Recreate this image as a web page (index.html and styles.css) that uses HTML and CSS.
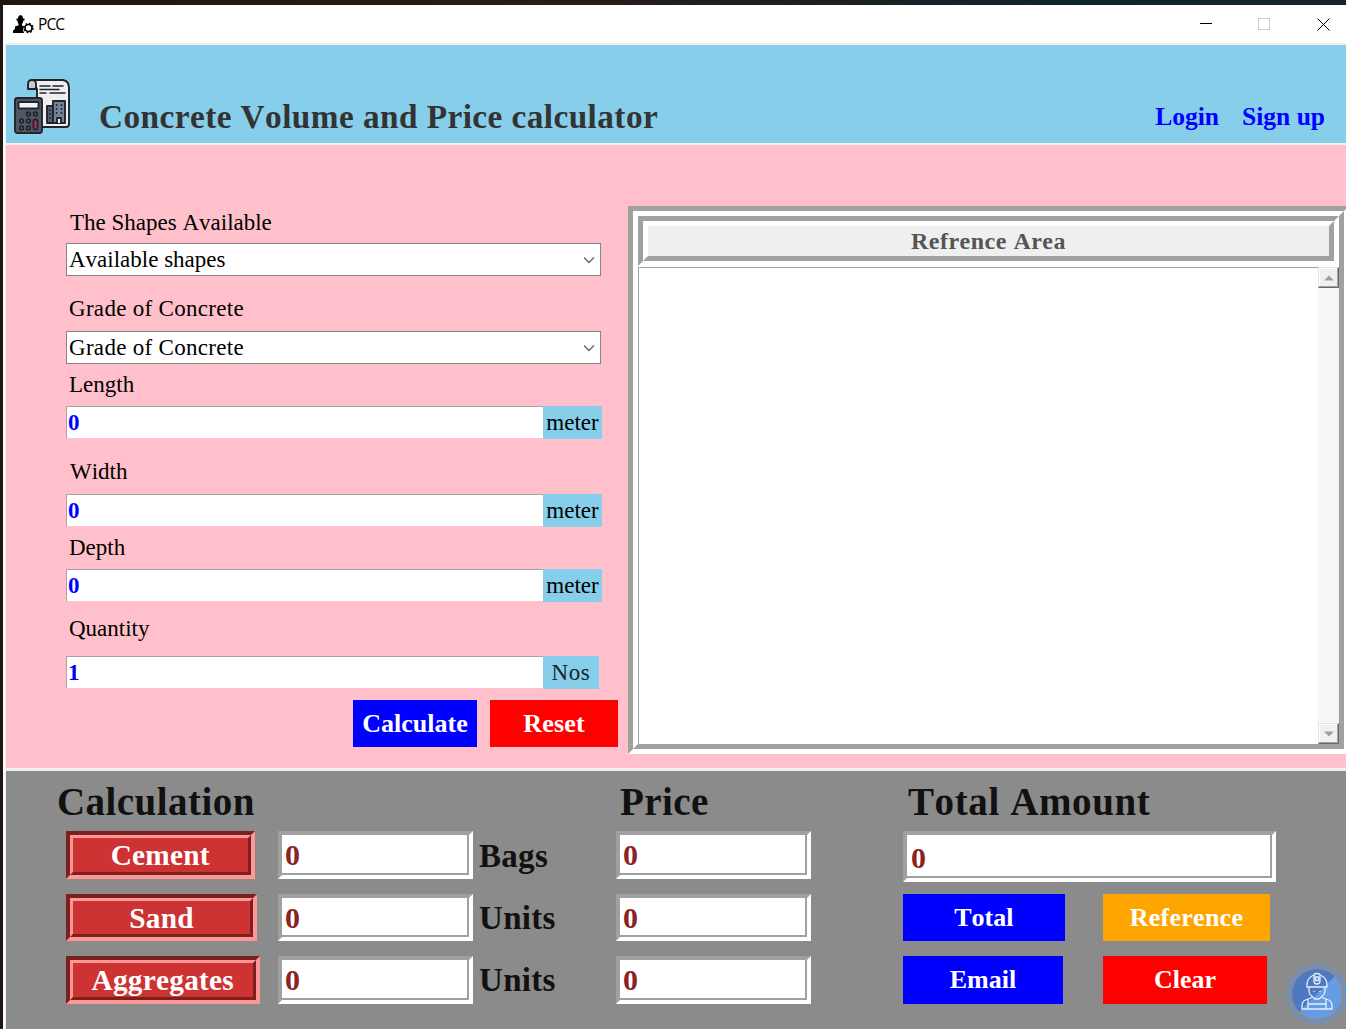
FILE: index.html
```html
<!DOCTYPE html>
<html lang="en">
<head>
<meta charset="utf-8">
<title>PCC</title>
<link rel="stylesheet" href="styles.css">
</head>
<body>
<div class="window">
  <header class="titlebar">
    <svg class="app-icon" width="21" height="20" viewBox="0 0 21 20">
      <path d="M3.500 3.500H5L5.600 1l1.900-1 2 1L10 3.500h1.500V5.500H10.300c0 1.500-.6 2.500-1.300 3.500v1.500l2 1-1 3.500 1 3H0v-2.500l2-1.500V11.500l3.500-1.200V9C4.800 8 4.500 7 4.500 5.500h-1z"/>
      <circle cx="15.500" cy="13" r="3.500" fill="none" stroke="#000" stroke-width="1.700"/>
      <circle cx="15.500" cy="13" r="4.600" fill="none" stroke="#000" stroke-width="1.300" stroke-dasharray="1.810 1.800"/>
    </svg>
    <span class="app-name">PCC</span>
    <svg class="controls" width="132" height="16" viewBox="0 0 132 16" fill="none">
      <path d="M0 7.500h12" stroke="#000"/>
      <rect x="58.500" y="2.500" width="11" height="11" stroke="#ccc"/>
      <path d="M117.500 2.500l12 12m0-12l-12 12" stroke="#000"/>
    </svg>
  </header>

  <div class="banner">
    <svg class="logo" width="58" height="58" viewBox="0 0 58 58" stroke="#20252b" stroke-width="1.900" stroke-linejoin="round" stroke-linecap="round">
      <path d="M18 2h31q6 1 6 8v36q0 3-3 3H23V11z" fill="#efefef"/>
      <path d="M14 11V6q0-4 4-4 4 0 4 4v5z" fill="#c8cccf"/>
      <path d="M26 8h10m3 0h10M26 11.500h19M26 15h6m4 0h15" stroke-width="1.500"/>
      <path d="M33 28h6v17h-6z" fill="#536271"/>
      <path d="M39 23h12v22H39z" fill="#718599"/>
      <path d="M42.500 27h.1m4.900 0h.1m-5.100 4h.1m4.900 0h.1m-5.100 4h.1m4.900 0h.1M36 32v.1M36 36v.1M36 40v.1" stroke-width="1.800"/>
      <path d="M43 45v-5h4v5" fill="#efefef"/>
      <rect x="1" y="20" width="27" height="35" rx="2.500" fill="#4e5865"/>
      <rect x="4.500" y="24" width="20" height="6.500" rx="1" fill="#f3f3f3"/>
      <g fill="#8a96a5"><circle cx="14.500" cy="36" r="1.700"/><circle cx="21.500" cy="36" r="1.700"/><circle cx="7.500" cy="43" r="1.700"/><circle cx="14.500" cy="43" r="1.700"/><circle cx="7.500" cy="50" r="1.700"/><circle cx="14.500" cy="50" r="1.700"/></g>
      <rect x="19.500" y="41.500" width="4" height="10" rx="1.500" fill="#cb2f4b"/>
    </svg>
    <h1>Concrete Volume and Price calculator</h1>
    <nav><a>Login</a><a>Sign up</a></nav>
  </div>

  <main class="workspace">
    <form class="form">
      <label class="first">The Shapes Available</label>
      <div class="combo"><span>Available shapes</span><svg width="12" height="8" viewBox="0 0 12 8"><path d="M1 1.500l5 5 5-5" fill="none" stroke="#666" stroke-width="1.300"/></svg></div>
      <label class="gap-wide grade">Grade of Concrete</label>
      <div class="combo grade"><span>Grade of Concrete</span><svg width="12" height="8" viewBox="0 0 12 8"><path d="M1 1.500l5 5 5-5" fill="none" stroke="#666" stroke-width="1.300"/></svg></div>
      <label>Length</label>
      <div class="entry"><b>0</b><span class="unit">meter</span></div>
      <label class="gap-wide second">Width</label>
      <div class="entry"><b>0</b><span class="unit">meter</span></div>
      <label>Depth</label>
      <div class="entry"><b>0</b><span class="unit">meter</span></div>
      <label class="gap-qty">Quantity</label>
      <div class="entry"><b>1</b><span class="unit nos">Nos</span></div>
      <div class="actions">
        <span class="btn blue calculate">Calculate</span>
        <span class="btn red reset">Reset</span>
      </div>
    </form>

    <section class="reference">
      <div class="reference-inner">
        <div class="ref-title"><h2>Refrence Area</h2></div>
        <div class="ref-body">
          <div class="ref-text"></div>
          <div class="scrollbar">
            <span class="arrow"><svg width="10" height="6" viewBox="0 0 10 6"><path d="M0 5.500L5 .5l5 5z" fill="#a0a0a0"/></svg></span>
            <span class="arrow"><svg width="10" height="6" viewBox="0 0 10 6"><path d="M0 .5l5 5 5-5z" fill="#a0a0a0"/></svg></span>
          </div>
        </div>
      </div>
    </section>
  </main>

  <footer class="results">
    <section class="calc">
      <h2>Calculation</h2>
      <div class="row"><span class="ridge cement"><i>Cement</i></span><span class="field"><i>0</i></span><b class="bags">Bags</b></div>
      <div class="row"><span class="ridge sand"><i>Sand</i></span><span class="field"><i>0</i></span><b>Units</b></div>
      <div class="row"><span class="ridge aggregates"><i>Aggregates</i></span><span class="field"><i>0</i></span><b>Units</b></div>
    </section>
    <section class="price">
      <h2>Price</h2>
      <div class="row"><span class="field"><i>0</i></span></div>
      <div class="row"><span class="field"><i>0</i></span></div>
      <div class="row"><span class="field"><i>0</i></span></div>
    </section>
    <section class="total">
      <h2>Total Amount</h2>
      <div class="row"><span class="field sum"><i>0</i></span></div>
      <div class="row"><span class="btn blue total-btn">Total</span><span class="btn orange reference-btn">Reference</span></div>
      <div class="row"><span class="btn blue email-btn">Email</span><span class="btn red clear-btn">Clear</span></div>
    </section>
    <svg class="badge" width="60" height="62" viewBox="0 0 60 62">
      <circle cx="30" cy="31" r="28.700" fill="none" stroke="#6293d8" stroke-width="2"/>
      <circle cx="30" cy="31" r="25" fill="#669be6"/>
      <path d="M12.300 48.700A25 25 0 0 1 47.700 13.300z" fill="#4e79c1"/>
      <g fill="none" stroke="#e6eefb" stroke-width="1.300" stroke-linejoin="round">
        <path d="M20 24v-2.500q0-7 7-9.500 0-1.500 3-1.500t3 1.500q7 2.500 7 9.500V24H20z"/>
        <path d="M27 12v6q0 3 3 3t3-3v-6M28.500 14h3v3.500h-3zM22 24v4q0 3 3 5.500l3 2.500h4l3-2.500q3-2.500 3-5.500v-4M27 28v1M33 28v1"/>
        <path d="M25 34.500L18.500 37q-3.500 1.500-3.500 6v3h30v-3q0-4.500-3.500-6L35 34.500M21 36v10M39 36v10M21 41h18"/>
      </g>
    </svg>
  </footer>
</div>
</body>
</html>
```
FILE: styles.css
```css
* { box-sizing: border-box; }

body {
  margin: 0;
  width: 1346px;
  height: 1029px;
  overflow: hidden;
  padding: 5px 0 0 3px;
  background: linear-gradient(90deg, #1f1511, #2a1c16 40%, #10242c 80%, #16252a);
  font-family: "Liberation Serif", "Times New Roman", serif;
  font-kerning: none;
  color: #111;
}

h1, h2 { margin: 0; font-weight: bold; white-space: nowrap; }
i { font-style: normal; }

.window {
  width: 1343px;
  height: 1024px;
  display: flex;
  flex-direction: column;
  background: #f0f0f0;
  border-left: 2px solid #fbfbfb;
  padding-left: 1px;
  overflow: hidden;
}

.titlebar {
  height: 38px;
  flex: none;
  display: flex;
  align-items: center;
  margin-left: -2px;
  padding: 0 14px 0 9px;
  background: #fff;
}
.app-icon { margin-top: 1px; }
.app-name {
  margin: -1px 0 0 4px;
  font: 15.500px/20px "Open Sans", "Noto Sans", sans-serif;
  letter-spacing: -.9px;
  color: #000;
}
.controls { margin: -1px 0 0 auto; }

.banner {
  height: 98px;
  flex: none;
  margin-top: 2px;
  display: flex;
  align-items: flex-start;
  background: #87ceeb;
}
.logo { margin: 33px 0 0 8px; }
.banner h1 {
  margin: 52px 0 0 27px;
  font-size: 33.300px;
  line-height: 40px;
  letter-spacing: .43px;
  color: #333;
}
.banner nav {
  margin: 52px 21px 0 auto;
  display: flex;
  gap: 23px;
  font-size: 25.500px;
  font-weight: bold;
  line-height: 40px;
  color: #00f;
}

.workspace {
  height: 623px;
  flex: none;
  margin-top: 2px;
  display: flex;
  align-items: flex-start;
  background: #ffc0cb;
}

.form {
  width: 562px;
  flex: none;
  padding: 61px 0 0 60px;
  font-size: 23px;
  color: #000;
}
.form label {
  display: block;
  height: 42px;
  padding-left: 3px;
  line-height: 41px;
}
.form label.first { height: 37px; padding-left: 4px; line-height: 33px; }
.form label.gap-wide { height: 55px; line-height: 66px; }
.form label.second { height: 54.500px; padding-left: 4px; }
.form label.gap-qty { height: 54.500px; line-height: 54px; }
.form .grade { letter-spacing: .3px; }

.combo {
  width: 535px;
  height: 33px;
  display: flex;
  align-items: center;
  justify-content: space-between;
  padding: 0 5px 0 2px;
  border: 1px solid #868686;
  background: #fff;
  line-height: 31px;
}
.entry {
  width: 536px;
  height: 33px;
  display: flex;
}
.entry b {
  width: 477px;
  height: 32px;
  padding-left: 1px;
  border-top: 1px solid #a5a5a5;
  border-left: 1px solid #a5a5a5;
  background: #fff;
  line-height: 31px;
  color: #00f;
}
.unit {
  width: 59px;
  height: 33px;
  background: #87ceeb;
  line-height: 33px;
  text-align: center;
}
.unit.nos { width: 56px; letter-spacing: .6px; color: #16232a; }

.btn {
  height: 47.500px;
  flex: none;
  font-size: 26px;
  font-weight: bold;
  line-height: 48px;
  text-align: center;
  color: #fff;
}
.blue { background: #00f; }
.red { background: #f00; }
.orange { background: orange; }

.actions {
  display: flex;
  gap: 13px;
  margin: 10.500px 0 0 287px;
}
.calculate { width: 124px; }
.reset { width: 128px; letter-spacing: .2px; }

.reference {
  width: 721px;
  height: 548px;
  flex: none;
  margin: 61px 0 0 60px;
  border: 5px solid;
  border-color: #a0a0a0 #fff #fff #a0a0a0;
}
.reference-inner {
  height: 538px;
  display: flex;
  flex-direction: column;
  border: 5px solid;
  border-color: #fff #a0a0a0 #a0a0a0 #fff;
  background: #fff;
}
.ref-title {
  width: 701px;
  height: 50px;
  border: 5px solid;
  border-color: #a0a0a0 #fff #fff #a0a0a0;
}
.ref-title h2 {
  height: 40px;
  border: 5px solid;
  border-color: #fff #a0a0a0 #a0a0a0 #fff;
  background: #efefef;
  font-size: 24px;
  line-height: 31px;
  letter-spacing: .5px;
  text-align: center;
  color: #555;
}
.ref-body { flex: 1; display: flex; padding-top: 1px; }
.ref-text {
  flex: 1;
  border-top: 1px solid #a0a0a0;
  border-left: 1px solid #a0a0a0;
}
.scrollbar {
  width: 21px;
  display: flex;
  flex-direction: column;
  justify-content: space-between;
  background: #f7f7f7;
}
.arrow {
  height: 21px;
  display: flex;
  align-items: center;
  justify-content: center;
  border: 1px solid;
  border-color: #e3e3e3 #696969 #696969 #e3e3e3;
  box-shadow: inset -1px -1px #a0a0a0, inset 1px 1px #fff;
  background: #f0f0f0;
}

.results {
  position: relative;
  height: 259px;
  flex: none;
  margin-top: 2.500px;
  display: flex;
  background: #8b8b8b;
}
.results h2 {
  height: 60.500px;
  font-size: 39px;
  line-height: 62px;
  letter-spacing: .45px;
}
.row {
  height: 47.500px;
  margin-bottom: 15px;
  display: flex;
  align-items: flex-start;
}
.calc { width: 610px; padding-left: 60px; }
.calc h2 { margin-left: -9px; }
.calc .field { margin-left: auto; }
.row b {
  width: 143px;
  padding-left: 6px;
  font-size: 33px;
  line-height: 48px;
  letter-spacing: .3px;
}
.row .bags { line-height: 51px; }

.ridge, .field {
  height: 47.500px;
  flex: none;
  border: 4px solid;
  font-weight: bold;
}
.ridge { border-color: #7b1f1f #ff9797 #ff9797 #7b1f1f; }
.ridge i {
  display: block;
  height: 100%;
  border: 3px solid;
  border-color: #ff9797 #7b1f1f #7b1f1f #ff9797;
  background: #cd3333;
  font-size: 29.300px;
  line-height: 35px;
  letter-spacing: .25px;
  text-align: center;
  color: #fff;
}
.cement { width: 188.500px; }
.sand { width: 191px; }
.aggregates { width: 193.500px; }

.field {
  width: 195px;
  border-color: #a0a0a0 #fff #fff #a0a0a0;
}
.field i {
  display: block;
  height: 100%;
  padding-left: 3px;
  border: solid #a0a0a0;
  border-width: 0 2px 2px 0;
  background: #fff;
  font-size: 30px;
  line-height: 40px;
  color: #8b2323;
}
.field.sum { width: 373px; height: 51px; }
.field.sum i { padding-left: 4px; line-height: 45px; }

.price { width: 287px; }
.price h2 { margin-left: 4px; }
.total h2 { margin-left: 5px; letter-spacing: .6px; }
.total { width: 372px; }
.total .btn + .btn { margin-left: auto; }
.total-btn { width: 161.500px; }
.email-btn { width: 160px; }
.total .reference-btn { width: 167px; margin-right: 5px; letter-spacing: .25px; }
.total .clear-btn { width: 164px; margin-right: 8px; }

.badge { position: absolute; left: 1280.500px; top: 192.500px; }
```
